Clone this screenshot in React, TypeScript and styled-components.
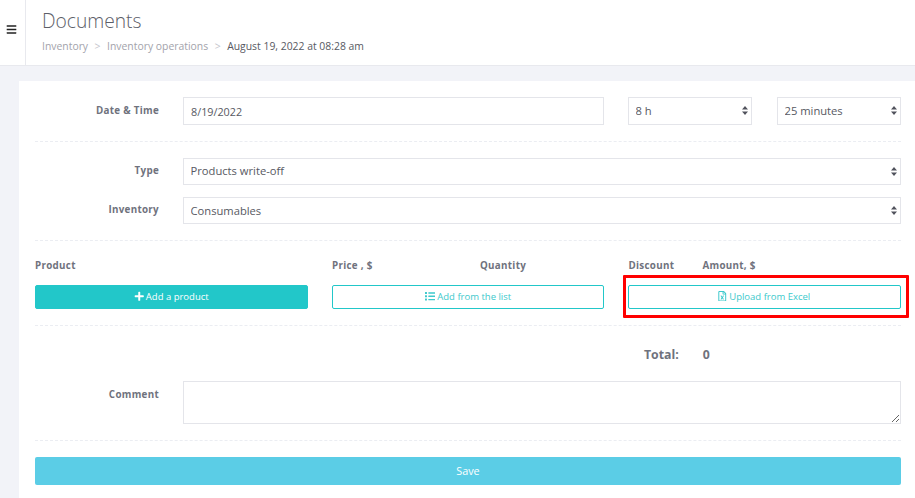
import React from "react";
import styled, { createGlobalStyle } from "styled-components";
import { FaBars, FaList, FaPlus, FaRegFileExcel } from "react-icons/fa";

const Global = createGlobalStyle`
  html, body { margin: 0; padding: 0; height: 498px; overflow: hidden; background: #f2f3f8; }
  body { font-family: "Open Sans", "Liberation Sans", sans-serif; color: #575962; }
  * { box-sizing: border-box; }
`;

const Page = styled.div`
  width: 915px;
  height: 498px;
  overflow: hidden;
  position: relative;
`;
const Header = styled.header`
  display: flex;
  height: 66px;
  background: #fff;
  border-bottom: 1px solid #e8e9ee;
`;
const Toggle = styled.div`
  width: 26px;
  display: flex;
  align-items: center;
  justify-content: center;
  border-right: 1px solid #e8e9ee;
  padding: 0 2px 6px 0;
  color: #222;
  font-size: 11px;
`;
const Heading = styled.div`
  padding: 8px 0 0 16px;
`;
const Title = styled.h1`
  margin: 0;
  font-size: 19.2px;
  line-height: 25px;
  font-weight: 300;
  color: #5c5e68;
`;
const Crumbs = styled.div`
  display: flex;
  margin-top: 6px;
  font-size: 10.4px;
  line-height: 14px;
  color: #a3a3ab;
`;
const Sep = styled.span`
  margin: 0 6.5px;
  color: #c5c5cc;
`;
const CrumbCurrent = styled.span`
  color: #575962;
`;
const Card = styled.main`
  margin: 15px 0 0 19px;
  padding: 16px 14px 0 16px;
  background: #fff;
  height: 420px;
`;
const Row = styled.div`
  display: flex;
  align-items: flex-start;
  gap: 24px;
`;
const Label = styled.label<{ $pad?: number }>`
  width: 124px;
  flex: none;
  padding-top: ${(p) => p.$pad ?? 6}px;
  text-align: right;
  font-size: 9.8px;
  line-height: 13px;
  font-weight: 700;
  letter-spacing: 0.3px;
  color: #6f727d;
`;
const Field = styled.input`
  height: 28px;
  width: 421px;
  flex: none;
  padding: 1px 7px 0;
  border: 1px solid #e4e5ea;
  border-radius: 0;
  font: 400 10.8px "Open Sans", sans-serif;
  color: #575962;
  background: #fff;
  outline: none;
`;
const SelectWrap = styled.div<{ $w: number }>`
  position: relative;
  flex: ${(p) => (p.$w ? "none" : "1")};
  width: ${(p) => (p.$w ? `${p.$w}px` : "auto")};
`;
const Select = styled.select<{ $h: number; $pb: number }>`
  display: block;
  width: 100%;
  height: ${(p) => p.$h}px;
  padding: 0 6.5px ${(p) => p.$pb}px;
  appearance: none;
  border: 1px solid #e4e5ea;
  border-radius: 0;
  background: #fff;
  font: 400 11.2px "Open Sans", sans-serif;
  color: #575962;
  outline: none;
`;
const Arrows = styled.svg`
  position: absolute;
  right: 4px;
  top: 50%;
  margin-top: -5px;
  width: 6px;
  height: 9px;
  fill: #50525c;
  pointer-events: none;
`;
const Time = styled(Row)`
  flex: 1;
  gap: 25px;
`;
const Divider = styled.hr<{ $top: number; $bottom: number }>`
  border: 0;
  border-top: 1px dashed #ebedf2;
  margin: ${(p) => p.$top}px 0 ${(p) => p.$bottom}px;
`;
const StackedRow = styled(Row)`
  margin-bottom: 12px;
  &:last-of-type { margin-bottom: 0; }
`;
const Columns = styled.div`
  display: grid;
  grid-template-columns: 297px 148px 148.5px 74px 1fr;
  font-size: 9.8px;
  line-height: 14px;
  font-weight: 700;
  letter-spacing: 0.3px;
  color: #6f727d;
  margin-top: 18px;
`;
const Buttons = styled.div`
  display: grid;
  grid-template-columns: 273px 272px 273px;
  gap: 24px;
  margin-top: 12px;
`;
const Btn = styled.button<{ $solid?: boolean; $shift?: number }>`
  display: flex;
  align-items: center;
  justify-content: center;
  gap: ${(p) => (p.$solid ? 1 : 2)}px;
  height: 24px;
  padding: 0 ${(p) => p.$shift ?? 0}px 2px 0;
  border: 1px solid #22c7c9;
  border-radius: 2px;
  background: ${(p) => (p.$solid ? "#22c7c9" : "#fff")};
  color: ${(p) => (p.$solid ? "#fff" : "#3dc9cc")};
  font: 400 9.5px "Open Sans", sans-serif;
  svg { font-size: 10.5px; }
`;
const TotalRow = styled.div`
  display: flex;
  font-weight: 700;
  font-size: 12.3px;
  line-height: 17px;
  color: #6f727d;
  margin-top: 20px;
  padding-left: 609px;
`;
const TotalValue = styled.span`
  margin-left: 24px;
`;
const CommentRow = styled(Row)`
  margin-top: 18px;
`;
const Comment = styled.textarea`
  flex: 1;
  height: 43px;
  display: block;
  border: 1px solid #e4e5ea;
  border-radius: 0;
  outline: none;
  background: #fff;
`;
const Save = styled.button`
  display: block;
  width: 100%;
  height: 28px;
  border: 0;
  border-radius: 2px;
  padding: 0 0 2px;
  background: #5bcde6;
  color: #fff;
  font: 400 10.8px "Open Sans", sans-serif;
`;
const Highlight = styled.div`
  position: absolute;
  left: 623px;
  top: 275px;
  width: 286px;
  height: 43px;
  border: 3px solid #f00;
  border-radius: 1px;
  pointer-events: none;
`;

const UpDown = () => (
  <Arrows viewBox="0 0 6 9">
    <path d="M3 0 6 3.5H0zM3 9 0 5.5h6z" />
  </Arrows>
);

const Dropdown = ({ value, w = 0, h = 27, pb = 2 }: { value: string; w?: number; h?: number; pb?: number }) => (
  <SelectWrap $w={w}>
    <Select $h={h} $pb={pb} defaultValue={value}>
      <option>{value}</option>
    </Select>
    <UpDown />
  </SelectWrap>
);

export default function App() {
  return (
    <Page>
      <Global />
      <Header>
        <Toggle>
          <FaBars />
        </Toggle>
        <Heading>
          <Title>Documents</Title>
          <Crumbs>
            <span>Inventory</span>
            <Sep>&gt;</Sep>
            <span>Inventory operations</span>
            <Sep>&gt;</Sep>
            <CrumbCurrent>August 19, 2022 at 08:28 am</CrumbCurrent>
          </Crumbs>
        </Heading>
      </Header>
      <Card>
        <Row>
          <Label $pad={7}>Date &amp; Time</Label>
          <Field defaultValue="8/19/2022" />
          <Time>
            <Dropdown value="8 h" w={124} h={28} />
            <Dropdown value="25 minutes" w={124} h={28} />
          </Time>
        </Row>
        <Divider $top={16} $bottom={16} />
        <StackedRow>
          <Label>Type</Label>
          <Dropdown value="Products write-off" />
        </StackedRow>
        <StackedRow>
          <Label>Inventory</Label>
          <Dropdown value="Consumables" pb={0} />
        </StackedRow>
        <Divider $top={16} $bottom={0} />
        <Columns>
          <span>Product</span>
          <span>Price , $</span>
          <span>Quantity</span>
          <span>Discount</span>
          <span>Amount, $</span>
        </Columns>
        <Buttons>
          <Btn $solid>
            <FaPlus />
            Add a product
          </Btn>
          <Btn>
            <FaList />
            Add from the list
          </Btn>
          <Btn $shift={2}>
            <FaRegFileExcel />
            Upload from Excel
          </Btn>
        </Buttons>
        <Divider $top={16} $bottom={0} />
        <TotalRow>
          <span>Total:</span>
          <TotalValue>0</TotalValue>
        </TotalRow>
        <CommentRow>
          <Label $pad={7}>Comment</Label>
          <Comment />
        </CommentRow>
        <Divider $top={16} $bottom={16} />
        <Save>Save</Save>
      </Card>
      <Highlight />
    </Page>
  );
}
